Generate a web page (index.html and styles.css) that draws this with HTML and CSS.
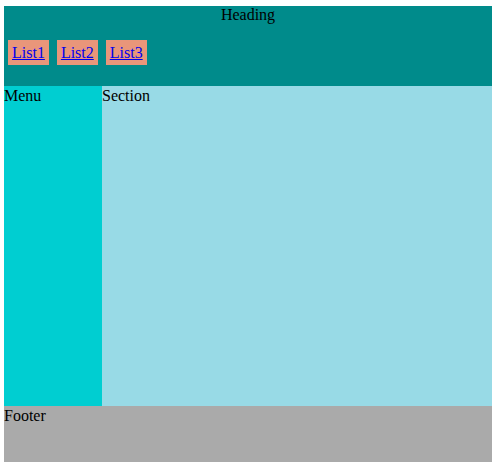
FILE: index.html
```html
<!DOCTYPE html>
<html>
<head>
<meta charset="utf-8">
<link rel="stylesheet" href="styles.css">
</head>
<body>
<div class="page">
  <header class="head">
    <div class="title">Heading</div>
    <ul class="nav">
      <li><a href="#">List1</a></li>
      <li><a href="#">List2</a></li>
      <li><a href="#">List3</a></li>
    </ul>
  </header>
  <div class="main">
    <nav class="menu">Menu</nav>
    <section class="section">Section</section>
  </div>
  <footer class="foot">Footer</footer>
</div>
</body>
</html>
```
FILE: styles.css
```css
html, body {
  margin: 0;
  padding: 0;
  background: #ffffff;
}
body {
  font-family: "Liberation Serif", "Times New Roman", serif;
  font-size: 16px;
  line-height: 18px;
  color: #000;
}
.page {
  margin: 6px 0 0 4px;
  width: 488px;
  display: flex;
  flex-direction: column;
}
.head {
  background: #008b8b;
  height: 80px;
  display: flex;
  flex-direction: column;
}
.title {
  text-align: center;
  height: 18px;
}
.nav {
  list-style: none;
  margin: 16px 0 0 4px;
  padding: 0;
  display: flex;
  gap: 8px;
}
.nav li {
  background: #e9967a;
  padding: 4px 4px 3px 4px;
}
.nav a {
  color: #0000ee;
  text-decoration: underline;
}
.main {
  display: flex;
  height: 320px;
}
.menu {
  width: 98px;
  background: #00ced1;
  padding-top: 1px;
}
.section {
  flex: 1;
  background: #98dae6;
  padding-top: 1px;
}
.foot {
  background: #aaaaaa;
  height: 56px;
  padding-top: 1px;
  box-sizing: border-box;
}
```
